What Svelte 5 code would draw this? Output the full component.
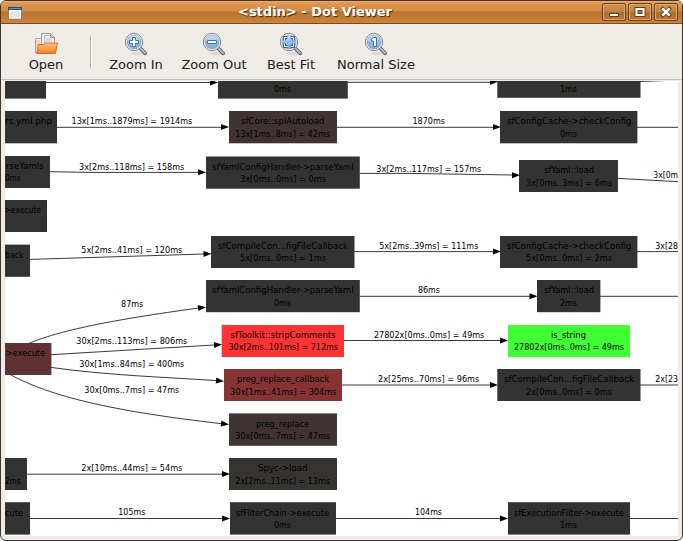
<script>
  const nodes = [
    { x: -60, y: 66, r: 46, b: 98.6, lines: [] },
    { x: 218, y: 66, r: 347.8, b: 98.6, lines: [['0ms', 274, 291, 92]] },
    { x: 497.3, y: 66, r: 640.5, b: 97.8, lines: [['1ms', 560, 577, 92]] },

    { x: -60, y: 111, r: 57, b: 143.3, lines: [['rs.yml.php', 5, 52, 124, 9]] },
    { x: 229, y: 111, r: 337, b: 143.3, fill: '#403333', lines: [['sfCore::splAutoload', 241, 324.5, 124, 9], ['13x[1ms..8ms] = 42ms', 235.3, 330, 137]] },
    { x: 500, y: 111, r: 637.4, b: 143.3, lines: [['sfConfigCache->checkConfig', 507, 631.5, 124, 9], ['0ms', 560, 577, 137]] },

    { x: -60, y: 156, r: 50, b: 188, lines: [['rseYamls', 6, 43.5, 169], ['0ms', 5, 20.5, 181]] },
    { x: 206, y: 156.5, r: 359.8, b: 188.7, lines: [['sfYamlConfigHandler->parseYaml', 212, 353.5, 170], ['3x[0ms..0ms] = 0ms', 240, 326, 182]] },
    { x: 519, y: 160, r: 618, b: 192, lines: [['sfYaml::load', 544, 594, 173], ['3x[0ms..3ms] = 6ms', 526, 612, 186]] },

    { x: -60, y: 200, r: 47, b: 232, lines: [['>execute', 4.5, 41, 213]] },

    { x: -60, y: 244.6, r: 30, b: 276.8, lines: [['back', 5, 23.5, 258]] },
    { x: 211, y: 236, r: 354.5, b: 268, lines: [['sfCompileCon...figFileCallback', 218, 348, 249, 9], ['5x[0ms..0ms] = 1ms', 240, 326, 261]] },
    { x: 500, y: 236, r: 637.4, b: 268, lines: [['sfConfigCache->checkConfig', 507, 631.5, 249, 9], ['5x[0ms..0ms] = 2ms', 526, 612, 261]] },

    { x: 206, y: 280, r: 359.8, b: 312.2, lines: [['sfYamlConfigHandler->parseYaml', 212, 353.5, 293], ['0ms', 274, 291, 306]] },
    { x: 537, y: 280, r: 600.4, b: 312.2, lines: [['sfYaml::load', 544, 594, 293], ['2ms', 560, 577, 306]] },

    { x: -60, y: 343, r: 51.4, b: 375, fill: '#5f3333', lines: [['>execute', 6, 45, 356]] },
    { x: 221.7, y: 325, r: 344, b: 357, fill: '#ff3333', lines: [['sfToolkit::stripComments', 230.5, 335.5, 338], ['30x[2ms..101ms] = 712ms', 228.5, 338, 350]] },
    { x: 508, y: 325, r: 630, b: 357, fill: '#40ff33', lines: [['is_string', 551, 586, 338], ['27802x[0ms..0ms] = 49ms', 514, 624, 350]] },

    { x: 224, y: 369, r: 342, b: 401, fill: '#873333', lines: [['preg_replace_callback', 237, 329, 382], ['30x[1ms..41ms] = 304ms', 230.3, 336.3, 395]] },
    { x: 497.3, y: 369, r: 640.5, b: 401, lines: [['sfCompileCon...figFileCallback', 504, 634, 382, 9], ['2x[0ms..0ms] = 0ms', 526, 612, 395]] },

    { x: 229, y: 413.4, r: 337, b: 445.8, fill: '#403333', lines: [['preg_replace', 256, 309, 427], ['30x[0ms..7ms] = 47ms', 235.3, 330, 439]] },

    { x: -60, y: 458, r: 27, b: 490, lines: [['2ms', 5, 20.5, 484]] },
    { x: 229, y: 458, r: 337, b: 490, fill: '#363333', lines: [['Spyc->load', 258, 307.5, 471, 9], ['2x[2ms..11ms] = 13ms', 235.3, 330, 484]] },

    { x: -60, y: 502.2, r: 30, b: 534.6, lines: [['cute', 5, 23, 516]] },
    { x: 230, y: 502.2, r: 336, b: 534.6, lines: [['sfFilterChain->execute', 236, 329, 516], ['0ms', 274, 291, 528]] },
    { x: 508, y: 502.2, r: 630, b: 534.6, lines: [['sfExecutionFilter->execute', 514, 624, 516], ['1ms', 560, 577, 528]] }
  ];

  const labels = [
    ['13x[1ms..1879ms] = 1914ms', 71.5, 192.3, 124],
    ['1870ms', 412.5, 445, 124],
    ['3x[2ms..118ms] = 158ms', 79, 184.3, 170],
    ['3x[2ms..117ms] = 157ms', 376.3, 481.3, 172],
    ['3x[0m', 653.3, 678, 178],
    ['5x[2ms..41ms] = 120ms', 81.3, 182.3, 253],
    ['5x[2ms..39ms] = 111ms', 379.3, 478.3, 249],
    ['3x[28', 655.3, 678, 249],
    ['87ms', 121, 143.3, 307],
    ['86ms', 418, 440, 293],
    ['30x[2ms..113ms] = 806ms', 76.3, 187.3, 344],
    ['27802x[0ms..0ms] = 49ms', 374, 484.3, 338],
    ['30x[1ms..84ms] = 400ms', 79.3, 184.3, 367],
    ['2x[25ms..70ms] = 96ms', 378, 479.3, 382],
    ['2x[23', 655.3, 678, 382],
    ['30x[0ms..7ms] = 47ms', 84.3, 179.3, 393],
    ['2x[10ms..44ms] = 54ms', 81.3, 182.3, 471],
    ['105ms', 118.3, 145.3, 515],
    ['104ms', 415, 442, 515]
  ];

  // Each edge: path data, then the arrow tip (x, y) and its angle.
  const edges = [
    ['M46 82.5H212', 218, 82.5, 0],
    ['M348 82.3H491', 498, 81.8, 0],
    ['M57 127.3H222', 229, 127, 0],
    ['M337 127.3H494', 501, 127, 0],
    ['M637 127.3H680'],
    ['M50 171.7L90 172.4H199', 206, 172.2, 0],
    ['M360 173.4H410L512 175', 520, 175.3, 1],
    ['M618 178.4L680 181.8'],
    ['M30 259.4L204 254', 211.5, 253.7, -2],
    ['M354 251.6H494', 501, 251.4, 0],
    ['M637 251.6H680'],
    ['M29 343.4C58 331 110 320 199 308', 206, 307.2, -6],
    ['M360 296.3H530', 537.5, 296.2, 0],
    ['M600 296.3H680'],
    ['M51 354.7L214 345', 222, 344.5, -4],
    ['M344 340.5H501', 508, 340.4, 0],
    ['M51 367.4C105 375 160 377 217 380.6', 224, 381.2, 5],
    ['M342 385H490', 498, 385, 0],
    ['M640 385H680'],
    ['M11 375C50 396 110 411 222 423.7', 229, 424.4, 6],
    ['M27 474.2H222', 230, 474, 0],
    ['M30 518.5H222', 230, 518.4, 0],
    ['M336 518.5H501', 508, 518.4, 0],
    ['M630 518.5H680'],
    ['M640 81.5L680 80']
  ];
</script>

{#snippet lens(kind)}
  <svg width="24" height="24" viewBox="0 0 24 24">
    <ellipse cx="15" cy="21.5" rx="8" ry="1.8" fill="#000" opacity=".08" />
    <path d="M15.8 16L21.3 21.3" stroke="#6a6c68" stroke-width="3.800" stroke-linecap="round" />
    <path d="M16 16.2L21.2 21.2" stroke="#b8bab5" stroke-width="1.8" stroke-linecap="round" />
    <circle cx="10" cy="10" r="8.7" fill="#f2f3f1" stroke="#858783" stroke-width="1" />
    <circle cx="10" cy="10" r="7" fill="url(#glass)" stroke="#7ea3d2" stroke-width=".8" />
    <path d="M4 9a6 6 0 0 1 12-1c-4-1-7 2-12 1z" fill="#fff" opacity=".25" />
    {#if kind === 'in'}
      <path d="M8.5 5.5h3v3h3v3h-3v3h-3v-3h-3v-3h3z" fill="#fff" stroke="#3f70ae" stroke-width="1" />
    {:else if kind === 'out'}
      <path d="M5.5 8.5h9v3h-9z" fill="#fff" stroke="#3f70ae" stroke-width="1" />
    {:else if kind === 'fit'}
      <path d="M5.500 8.500V5.500H8.500M11.500 5.500H14.500V8.500M14.500 11.500V14.500H11.500M8.500 14.500H5.500V11.500" fill="none" stroke="#3465a4" stroke-width="2.800" />
      <path d="M5.500 8.500V5.500H8.500M11.500 5.500H14.500V8.500M14.500 11.500V14.500H11.500M8.500 14.500H5.500V11.500" fill="none" stroke="#fff" stroke-width="1" />
    {:else}
      <path d="M9.5 5.5h3v9h-3v-5.500h-2v-2z" fill="#fff" stroke="#3f70ae" stroke-width="1" />
    {/if}
  </svg>
{/snippet}

<div class="window">
  <header>
    <svg class="app" width="14" height="13" viewBox="0 0 14 13">
      <rect x=".5" y=".5" width="13" height="11.500" fill="#e5e7e2" stroke="#7e8580" />
      <rect width="14" height="3" fill="#204a87" /><path d="M1 1.500h12" stroke="#5d8dcc" />
      <path d="M1.500 11V3.500h11V11z" fill="none" stroke="#fff" />
    </svg>
    <h1>&lt;stdin&gt; - Dot Viewer</h1>
    <div class="controls">
      <button aria-label="Minimize"><svg width="22" height="16"><rect x="6.500" y="9.500" width="9" height="3" fill="#fff" stroke="#6a431c" /></svg></button>
      <button aria-label="Maximize"><svg width="22" height="16"><rect x="7.500" y="5" width="7" height="6" fill="none" stroke="#6a431c" stroke-width="4" /><rect x="7.500" y="5" width="7" height="6" fill="none" stroke="#fff" stroke-width="2" /></svg></button>
      <button aria-label="Close"><svg width="22" height="16"><path d="M7.800 4.800l6.400 6.400M14.200 4.800l-6.400 6.400" stroke="#6a431c" stroke-width="4" stroke-linecap="square" /><path d="M7.300 4.300l7.400 7.400M14.700 4.300l-7.400 7.400" stroke="#fff" stroke-width="2.500" /></svg></button>
    </div>
  </header>

  <nav>
    <button class="tool open">
      <svg width="24" height="24" viewBox="0 0 24 24">
        <path d="M1.500 6.500h5l1 1h13v13h-19z" fill="#fbfaf7" stroke="#aaa39b" />
        <path d="M3 8v10M5 8v9" stroke="#f4a15d" stroke-width="1" />
        <path d="M7.500 1.500h9l4 4v9h-13z" fill="#f8f8f7" stroke="#9a9b98" />
        <path d="M10.500 3.500h7l3 4v7h-10z" fill="#eee" stroke="#999" stroke-width=".7" />
        <path d="M16.500 1.500v4h4z" fill="#ccc" stroke="#888" stroke-width=".7" />
        <path d="M12 7h5M12 9h6" stroke="#bbb" stroke-width=".8" />
        <path d="M4.500 12.500h5l2-1.500h12l-2 10.500h-19z" fill="url(#folder)" stroke="#d1661a" stroke-width=".9" />
      </svg>
      <span>Open</span>
    </button>
    <i class="sep"></i>
    <button class="tool zin">{@render lens('in')}<span>Zoom In</span></button>
    <button class="tool zout">{@render lens('out')}<span>Zoom Out</span></button>
    <button class="tool fit">{@render lens('fit')}<span>Best Fit</span></button>
    <button class="tool normal">{@render lens('one')}<span>Normal Size</span></button>
  </nav>

  <main>
    <svg class="graph" width="673" height="455" viewBox="5 81 673 455">
      <defs>
        <linearGradient id="glass" x2="0" y2="1"><stop stop-color="#a9c8ee" /><stop offset="1" stop-color="#7fabdf" /></linearGradient>
        <linearGradient id="folder" x2="0" y2="1"><stop stop-color="#fbc08a" /><stop offset=".5" stop-color="#f8a254" /><stop offset="1" stop-color="#f07d25" /></linearGradient>
      </defs>
      {#each nodes as n}
        <rect x={n.x} y={n.y} width={n.r - n.x} height={n.b - n.y} fill={n.fill ?? '#333'} />
        {#each n.lines as [text, left, right, base, size]}
          <text x={left} y={base} font-size={size ?? 8} textLength={right - left} lengthAdjust="spacingAndGlyphs">{text}</text>
        {/each}
      {/each}
      {#each edges as [d, x, y, angle]}
        <path {d} fill="none" stroke="#222" stroke-width=".9" />
        {#if x}<path d="M0 0L-8 -3V3z" transform="translate({x} {y}) rotate({angle})" />{/if}
      {/each}
      {#each labels as [text, left, right, base]}
        <text x={left} y={base} font-size="8" textLength={right - left} lengthAdjust="spacingAndGlyphs">{text}</text>
      {/each}
    </svg>
  </main>
</div>

<style>
  :global(body) { background: #fff; overflow: hidden; }
  .window {
    box-sizing: border-box; width: 683px; height: 541px; overflow: hidden;
    display: flex; flex-direction: column;
    border: 1px solid #403532; border-radius: 6px; background: #efebe7;
    font-family: "DejaVu Sans", sans-serif; color: #1a1a1a;
  }
  header {
    box-sizing: border-box; height: 23px; flex: none; display: flex; align-items: center;
    padding: 0 4px 0 7px; border-bottom: 1px solid #7c4b1c;
    background: linear-gradient(#f0b070 0, #e2964f 2px, #d38a42 10px, #b87530 11px, #c37c33 17px, #cd8538 22px);
  }
  .app { flex: none; margin-top: 2px; }
  h1 {
    flex: 1; margin: 0 0 0 6px; text-align: center; font-size: 13px; line-height: 20px; color: #fff;
    text-shadow: 1px 1px 1px #4a2c0e;
  }
  .controls { display: flex; gap: 2px; align-self: flex-start; padding-top: 2px; }
  .controls button {
    box-sizing: border-box; width: 24px; height: 18px; padding: 0; border: 1px solid #6a431c; border-radius: 2px;
    background: linear-gradient(#d69450, #c18041 48%, #a96d30 52%, #b87a38);
    box-shadow: inset 0 0 0 1px #dda66f;
  }
  .controls svg { display: block; }
  nav { height: 56px; flex: none; display: flex; padding-top: 8px; box-sizing: border-box; border-bottom: 1px solid #c9bcb2; }
  .tool {
    box-sizing: border-box; flex: none; height: 44px; padding: 0; border: 0; background: none; font: inherit; font-size: 13px; color: inherit;
    display: flex; flex-direction: column; align-items: center; white-space: nowrap;
  }
  .tool svg { flex: none; }
  .tool span { line-height: 16px; margin-top: 1px; }
  .open { width: 60px; margin-left: 15px; }
  .sep { width: 1px; height: 32px; margin: 4px 0 0 14px; background: #bdb2a8; box-shadow: 1px 0 #fff; }
  .zin { width: 70px; margin-left: 10px; }
  .zout { width: 80px; margin-left: 3px; }
  .fit { width: 70px; margin-left: 2px; }
  .normal { width: 90px; margin-left: 5px; }
  main { flex: none; margin: 1px 4px 0; height: 455px; background: #fff; }
  .graph { display: block; overflow: hidden; }
  .graph text { fill: #000; white-space: pre; }
</style>
